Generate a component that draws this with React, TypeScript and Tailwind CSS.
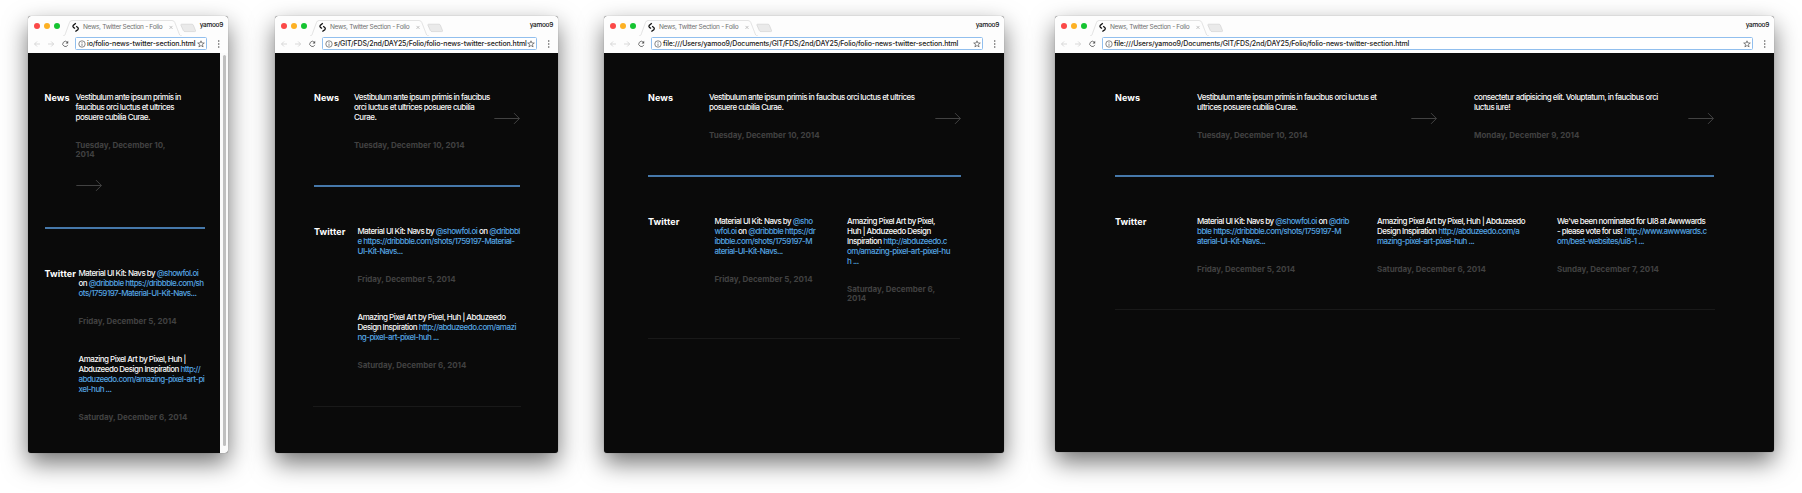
import type { ReactNode } from "react";

const A = ({ children }: { children: ReactNode }) => <span className="text-[#55a5e2]">{children}</span>;

function Lines({ lines }: { lines: ReactNode[] }) {
  return (
    <p className="text-[8px] leading-[10px] font-medium tracking-[-0.52px] whitespace-nowrap text-[#f8f8f8]">
      {lines.map((l, i) => (
        <span key={i} className="block">{l}</span>
      ))}
    </p>
  );
}

function DateText({ lines }: { lines: string[] }) {
  return (
    <p className="mt-[19px] text-[8px] leading-[9px] font-bold tracking-[-0.05px] whitespace-nowrap text-[#414141]">
      {lines.map((l) => (
        <span key={l} className="block">{l}</span>
      ))}
    </p>
  );
}

function Post({ lines, date, className }: { lines: ReactNode[]; date: string[]; className: string }) {
  return (
    <article className={className}>
      <Lines lines={lines} />
      <DateText lines={date} />
    </article>
  );
}

function LongArrow({ className }: { className: string }) {
  return (
    <svg className={`shrink-0 ${className}`} width="26" height="12" viewBox="0 0 26 12" fill="none" stroke="#484848" strokeWidth="0.9">
      <path d="M0.3 6.500H25.300M20 1.100L25.400 6.500L20 11.900" />
    </svg>
  );
}

function Section({ title, width, children }: { title: string; width: string; children: ReactNode }) {
  return (
    <section className="flex">
      <h2 className={`shrink-0 text-[9px] leading-[11px] font-bold tracking-[0.1px] text-white ${width}`}>{title}</h2>
      {children}
    </section>
  );
}

const Rule = ({ className }: { className: string }) => <div className={`h-[2px] bg-[#4678aa] ${className}`} />;
const ThinRule = ({ className }: { className: string }) => <div className={`h-px bg-[#191919] ${className}`} />;

function Browser({ width, height, url, children, scroll = false }: { width: string; height: string; url: string; children: ReactNode; scroll?: boolean }) {
  return (
    <div className={`flex shrink-0 flex-col overflow-hidden rounded-[3px] bg-[#0a0a0a] shadow-[0_0_1px_rgba(0,0,0,0.45),0_10px_24px_rgba(0,0,0,0.55)] ${width} ${height}`}>
      <header className="h-[37px] shrink-0 bg-[#fdfdfd]">
        <div className="flex h-5 items-start pl-[6px]">
          <div className="flex shrink-0 gap-1 pt-[6.5px]">
            <i className="size-[6px] rounded-full bg-[#fb4948]" />
            <i className="size-[6px] rounded-full bg-[#fdb124]" />
            <i className="size-[6px] rounded-full bg-[#16c431]" />
          </div>
          <div className="relative ml-[3px] h-5 w-[134px] shrink-0">
            <svg className="absolute inset-0" width="134" height="20" viewBox="0 0 134 20" fill="none">
              <path d="M0 20C2 20 2 18.5 3 16L6.5 6.5Q7.2 4.5 9 4.5H109Q111 4.5 111.800 6.500L115.500 16C116.500 18.500 116.500 20 119 20" stroke="#d9d9d9" strokeWidth="0.7" />
              <path d="M118.500 8.200H129Q130 8.200 130.400 9.200L132.500 14.500Q132.900 15.600 131.700 15.600H122Q120.800 15.600 120.300 14.500L118 9.400Q117.500 8.200 118.500 8.200Z" fill="#eaeaea" stroke="#cfcfcf" strokeWidth="0.6" />
              <path d="M12.800 7.300L10.400 9.200Q9.300 10.600 10.700 11.600L12 12.600M12.400 15.600L14.800 13.700Q15.900 12.300 14.500 11.300L13.200 10.300" stroke="#111" strokeWidth="1.300" />
              <path d="M106.500 9.900L109.500 12.900M109.500 9.900L106.500 12.900" stroke="#aaa" strokeWidth="0.7" />
            </svg>
            <span className="relative ml-[20px] block pt-[7px] text-[6.5px] leading-[9px] tracking-[-0.3px] whitespace-nowrap text-[#6f6f6f]">News, Twitter Section - Folio</span>
          </div>
          <span className="mr-[5px] ml-auto pt-[5px] text-[6.5px] leading-[9px] font-medium tracking-[-0.3px] text-[#111]">yamoo9</span>
        </div>
        <div className="flex h-[17px] items-start pt-[1px] pl-[6px]">
          <svg className="mt-[3px] shrink-0" width="37" height="8" viewBox="0 0 37 8" fill="none" strokeWidth="0.8">
            <path d="M6 4H.6M3 1.5L.5 4L3 6.5M14 4H19.6M17.2 1.5L19.7 4L17.2 6.5" stroke="#cfcfcf" />
            <path d="M33.3 2.2A2.6 2.6 0 1 0 33.8 4.9" stroke="#555" />
            <path d="M34.2 .8V3.4H31.6Z" fill="#555" />
          </svg>
          <div className="mr-[21px] ml-[3.5px] flex h-[13px] min-w-0 flex-1 items-center overflow-hidden rounded-[1.5px] border-[1.2px] border-[#91bfee] bg-white pr-[1px] pl-[2px]">
            <svg className="shrink-0" width="8" height="8" viewBox="0 0 8 8" fill="none" stroke="#555" strokeWidth="0.7">
              <circle cx="4" cy="4" r="3.2" />
              <path d="M4 3.5V5.9M4 2.1V2.9" />
            </svg>
            <span className="ml-[1.5px] flex-1 text-[7px] leading-[11px] font-medium tracking-[-0.13px] whitespace-nowrap text-[#1b1b1b]">{url}</span>
            <svg className="shrink-0" width="8" height="8" viewBox="0 0 8 8" fill="none" stroke="#555" strokeWidth="0.7">
              <path d="M4 .8L4.9 3H7.3L5.4 4.5L6.1 6.9L4 5.5L1.9 6.9L2.6 4.5L.7 3H3.1Z" />
            </svg>
          </div>
          <svg className="mt-[3px] -ml-[11px] shrink-0" width="11" height="8" viewBox="0 0 11 8" fill="#555">
            <circle cx="1.7" cy="1" r=".8" />
            <circle cx="1.7" cy="4" r=".8" />
            <circle cx="1.7" cy="7" r=".8" />
          </svg>
        </div>
      </header>
      <div className="flex min-h-0 flex-1">
        <main className="min-w-0 flex-1 pt-[39px]">{children}</main>
        {scroll && (
          <div className="w-[8px] shrink-0 bg-[#fafafa] pt-[2px] pl-[2.5px]">
            <div className="h-[391px] w-[3.5px] rounded-full bg-[#bfbfbf]" />
          </div>
        )}
      </div>
    </div>
  );
}

const fullUrl = "file:///Users/yamoo9/Documents/GIT/FDS/2nd/DAY25/Folio/folio-news-twitter-section.html";

export default function App() {
  return (
    <div className="flex h-[493px] w-[1802px] items-start overflow-hidden bg-white pt-4 pl-7 font-['Inter',sans-serif]">
      <Browser width="w-[200px]" height="h-[437px]" url="io/folio-news-twitter-section.html" scroll>
        <div className="pl-[16.5px]">
          <Section title="News" width="w-[31px]">
            <div>
              <Post className="" lines={["Vestibulum ante ipsum primis in", "faucibus orci luctus et ultrices", "posuere cubilia Curae."]} date={["Tuesday, December 10,", "2014"]} />
              <LongArrow className="mt-[20px]" />
            </div>
          </Section>
          <Rule className="mt-[36px] w-[160px]" />
          <div className="h-[38.5px]" />
          <Section title="Twitter" width="w-[34px]">
            <div>
              <Post className="" lines={[<>Material UI Kit: Navs by <A>@showfol.oi</A></>, <>on <A>@dribbble https://dribbble.com/sh</A></>, <A>ots/1759197-Material-UI-Kit-Navs...</A>]} date={["Friday, December 5, 2014"]} />
              <Post className="mt-7" lines={["Amazing Pixel Art by Pixel, Huh |", <>Abduzeedo Design Inspiration <A>http://</A></>, <A>abduzeedo.com/amazing-pixel-art-pi</A>, <A>xel-huh ...</A>]} date={["Saturday, December 6, 2014"]} />
            </div>
          </Section>
        </div>
      </Browser>

      <div className="w-[47px] shrink-0" />
      <Browser width="w-[283px]" height="h-[437px]" url="s/GIT/FDS/2nd/DAY25/Folio/folio-news-twitter-section.html">
        <div className="pl-[39px]">
          <Section title="News" width="w-[40px]">
            <Post className="w-[139.5px]" lines={["Vestibulum ante ipsum primis in faucibus", "orci luctus et ultrices posuere cubilia", "Curae."]} date={["Tuesday, December 10, 2014"]} />
            <LongArrow className="mt-[20px]" />
          </Section>
          <Rule className="mt-[35px] w-[206px]" />
          <div className="h-[39px]" />
          <Section title="Twitter" width="w-[43.5px]">
            <div>
              <Post className="" lines={[<>Material UI Kit: Navs by <A>@showfol.oi</A> on <A>@dribbbl</A></>, <A>e https://dribbble.com/shots/1759197-Material-</A>, <A>UI-Kit-Navs...</A>]} date={["Friday, December 5, 2014"]} />
              <Post className="mt-7" lines={["Amazing Pixel Art by Pixel, Huh | Abduzeedo", <>Design Inspiration <A>http://abduzeedo.com/amazi</A></>, <A>ng-pixel-art-pixel-huh ...</A>]} date={["Saturday, December 6, 2014"]} />
            </div>
          </Section>
          <ThinRule className="mt-[36px] -ml-px w-[208px]" />
        </div>
      </Browser>

      <div className="w-[46px] shrink-0" />
      <Browser width="w-[400px]" height="h-[437px]" url={fullUrl}>
        <div className="pl-[44px]">
          <Section title="News" width="w-[61px]">
            <Post className="w-[225.5px]" lines={["Vestibulum ante ipsum primis in faucibus orci luctus et ultrices", "posuere cubilia Curae."]} date={["Tuesday, December 10, 2014"]} />
            <LongArrow className="mt-[20px]" />
          </Section>
          <Rule className="mt-[35px] w-[313px]" />
          <div className="h-[39px]" />
          <Section title="Twitter" width="w-[66.5px]">
            <Post className="w-[132.5px]" lines={[<>Material UI Kit: Navs by <A>@sho</A></>, <><A>wfol.oi</A> on <A>@dribbble https://dr</A></>, <A>ibbble.com/shots/1759197-M</A>, <A>aterial-UI-Kit-Navs...</A>]} date={["Friday, December 5, 2014"]} />
            <Post className="" lines={["Amazing Pixel Art by Pixel,", "Huh | Abduzeedo Design", <>Inspiration <A>http://abduzeedo.c</A></>, <A>om/amazing-pixel-art-pixel-hu</A>, <A>h ...</A>]} date={["Saturday, December 6,", "2014"]} />
          </Section>
          <ThinRule className="mt-[35px] w-[312px]" />
        </div>
      </Browser>

      <div className="w-[51px] shrink-0" />
      <Browser width="w-[719px]" height="h-[436px]" url={fullUrl}>
        <div className="pl-[60px]">
          <Section title="News" width="w-[82px]">
            <Post className="w-[214px]" lines={["Vestibulum ante ipsum primis in faucibus orci luctus et", "ultrices posuere cubilia Curae."]} date={["Tuesday, December 10, 2014"]} />
            <LongArrow className="mt-[20px]" />
            <Post className="ml-[37px] w-[214px]" lines={["consectetur adipisicing elit. Voluptatum, in faucibus orci", "luctus iure!"]} date={["Monday, December 9, 2014"]} />
            <LongArrow className="mt-[20px]" />
          </Section>
          <Rule className="mt-[35px] w-[599px]" />
          <div className="h-[39px]" />
          <Section title="Twitter" width="w-[82px]">
            <Post className="w-[180px]" lines={[<>Material UI Kit: Navs by <A>@showfol.oi</A> on <A>@drib</A></>, <A>bble https://dribbble.com/shots/1759197-M</A>, <A>aterial-UI-Kit-Navs...</A>]} date={["Friday, December 5, 2014"]} />
            <Post className="w-[180px]" lines={["Amazing Pixel Art by Pixel, Huh | Abduzeedo", <>Design Inspiration <A>http://abduzeedo.com/a</A></>, <A>mazing-pixel-art-pixel-huh ...</A>]} date={["Saturday, December 6, 2014"]} />
            <Post className="" lines={["We've been nominated for UI8 at Awwwards", <>- please vote for us! <A>http://www.awwwards.c</A></>, <A>om/best-websites/ui8-1 ...</A>]} date={["Sunday, December 7, 2014"]} />
          </Section>
          <ThinRule className="mt-[35px] w-[600px]" />
        </div>
      </Browser>
    </div>
  );
}
